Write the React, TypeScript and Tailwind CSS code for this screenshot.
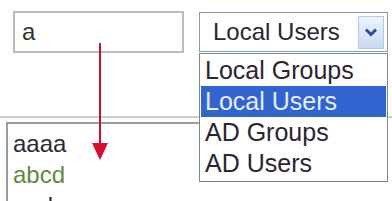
import { useState } from 'react';

const options = ['Local Groups', 'Local Users', 'AD Groups', 'AD Users'];

const results = [
  { name: 'aaaa', color: 'text-[#2e2a33]' },
  { name: 'abcd', color: 'text-[#5f8a3c]' },
  { name: 'aad', color: 'text-[#2e2a33]' },
];

function Chevron() {
  return (
    <svg width="14" height="10" viewBox="0 0 14 10">
      <path d="M2 2.5 L7 7.5 L12 2.5" fill="none" stroke="#2a4f8f" strokeWidth="3" />
    </svg>
  );
}

// annotation arrow from the search box down to the result list
function DownArrow() {
  return (
    <svg className="absolute left-[91px] top-[42px]" width="18" height="120" viewBox="0 0 18 120">
      <line x1="9" y1="1" x2="9" y2="104" stroke="#c8102e" strokeWidth="2" />
      <path d="M1 101 L17 101 L9 118 Z" fill="#d8102a" />
    </svg>
  );
}

export default function App() {
  const [query] = useState('a');
  const [selected] = useState('Local Users');

  return (
    <div
      className="relative w-[392px] h-[201px] overflow-hidden bg-white"
      style={{ fontFamily: '"Liberation Sans", Arial, sans-serif' }}
    >
      {/* Search row */}
      <div className="flex items-start pt-[11px] pl-[13px] gap-[15px]">
        <div className="w-[171px] h-[42px] border-2 border-[#b4bcc4] flex items-center px-[7px] text-[24px] text-[#333] leading-none">
          {query}
        </div>
        <div className="mt-[1px] w-[189px] h-[40px] border border-[#7f9db9] flex items-center justify-between pl-[13px] pr-[3px] text-[24px] text-[#2b2530] leading-none">
          <span>{selected}</span>
          <div className="w-[26px] h-[33px] border border-[#b6c8e4] bg-gradient-to-b from-[#eef3fc] to-[#c9d9f2] flex items-center justify-center">
            <Chevron />
          </div>
        </div>
      </div>

      {/* Divider */}
      <div className="mt-[63px] h-[2px] bg-[#cdcdcd]" />

      {/* Result list */}
      <div className="ml-[6px] mt-[4px] w-[300px] h-[90px] border-t-2 border-l-2 border-[#9c9c9c] pt-[4px] pl-[5px]">
        {results.map((r) => (
          <div key={r.name} className={`h-[31px] leading-[31px] text-[24px] ${r.color}`}>
            {r.name}
          </div>
        ))}
      </div>

      {/* Open dropdown menu */}
      <div className="absolute left-[199px] top-[53px] w-[189px] border border-[#7a8794] bg-white pt-[1px] pb-[2px] px-[1px]">
        {options.map((o) => (
          <div
            key={o}
            className={`h-[31px] leading-[31px] pl-[4px] text-[25px] ${
              o === selected ? 'bg-[#3264cf] text-[#e6eeff]' : 'text-[#2b2530]'
            }`}
          >
            {o}
          </div>
        ))}
      </div>

      <DownArrow />
    </div>
  );
}
